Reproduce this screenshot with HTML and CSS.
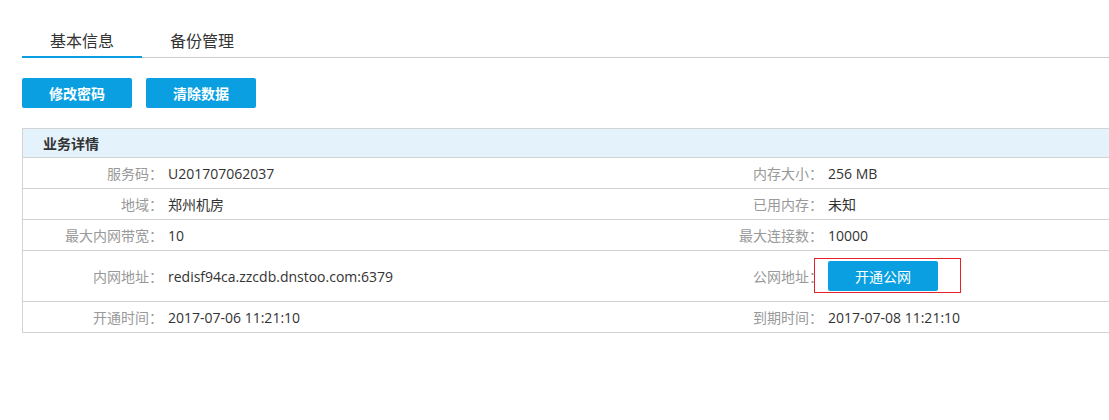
FILE: index.html
```html
<!DOCTYPE html>
<html lang="zh-CN">
<head>
  <meta charset="UTF-8">
  <title>业务详情</title>
  <link rel="stylesheet" href="styles.css">
</head>
<body>
  <div class="page">
    <div class="tabs">
      <div class="tab active">基本信息</div>
      <div class="tab">备份管理</div>
    </div>

    <div class="actions">
      <button class="btn">修改密码</button>
      <button class="btn">清除数据</button>
    </div>

    <div class="detail">
      <div class="detail-head">业务详情</div>
      <div class="row">
        <div class="label">服务码：</div>
        <div class="value">U201707062037</div>
        <div class="label">内存大小：</div>
        <div class="value">256 MB</div>
      </div>
      <div class="row">
        <div class="label">地域：</div>
        <div class="value">郑州机房</div>
        <div class="label">已用内存：</div>
        <div class="value">未知</div>
      </div>
      <div class="row">
        <div class="label">最大内网带宽：</div>
        <div class="value">10</div>
        <div class="label">最大连接数：</div>
        <div class="value">10000</div>
      </div>
      <div class="row tall">
        <div class="label">内网地址：</div>
        <div class="value">redisf94ca.zzcdb.dnstoo.com:6379</div>
        <div class="label">公网地址：</div>
        <div class="value">
          <span class="marked">
            <button class="btn btn-plain">开通公网</button>
          </span>
        </div>
      </div>
      <div class="row">
        <div class="label">开通时间：</div>
        <div class="value">2017-07-06 11:21:10</div>
        <div class="label">到期时间：</div>
        <div class="value">2017-07-08 11:21:10</div>
      </div>
    </div>
  </div>
</body>
</html>
```

FILE: styles.css
```css
body {
  margin: 0;
  padding: 0;
  background: #fff;
  font-family: "Open Sans", "Noto Sans CJK SC", sans-serif;
  font-size: 14px;
  color: #333;
  overflow: hidden;
}
.page {
  padding: 26px 0 0 22px;
  width: 1120px;
}
.tabs {
  display: flex;
  border-bottom: 1px solid #ccc;
}
.tab {
  width: 120px;
  height: 30px;
  line-height: 30px;
  text-align: center;
  font-size: 16px;
  color: #333;
  border-bottom: 2px solid transparent;
  margin-bottom: -1px;
}
.tab.active {
  border-bottom-color: #089ee0;
}
.actions {
  display: flex;
  gap: 14px;
  margin: 20px 0;
}
.btn {
  width: 110px;
  height: 30px;
  padding: 0;
  border: none;
  border-radius: 2px;
  background: #0a9fe0;
  color: #fff;
  font-family: "Noto Sans CJK SC", sans-serif;
  font-size: 14px;
  font-weight: bold;
  cursor: pointer;
}
.btn-plain {
  font-weight: normal;
}
.detail {
  border: 1px solid #d3d3d3;
  border-right: none;
}
.detail-head {
  height: 28px;
  line-height: 28px;
  padding-left: 20px;
  background: #e4f2fb;
  font-family: "Noto Sans CJK SC", sans-serif;
  font-size: 14px;
  font-weight: bold;
  color: #333;
}
.row {
  display: grid;
  grid-template-columns: 140px 520px 140px 1fr;
  align-items: center;
  height: 30px;
  border-top: 1px solid #d3d3d3;
}
.row.tall {
  height: 50px;
}
.label {
  text-align: right;
  color: #999;
}
.value {
  padding-left: 5px;
  color: #333;
}
.marked {
  position: relative;
  display: inline-block;
  vertical-align: middle;
}
.marked::after {
  content: "";
  position: absolute;
  left: -14px;
  top: -3px;
  right: -23px;
  bottom: -2px;
  border: 1px solid #e8202a;
}
```
